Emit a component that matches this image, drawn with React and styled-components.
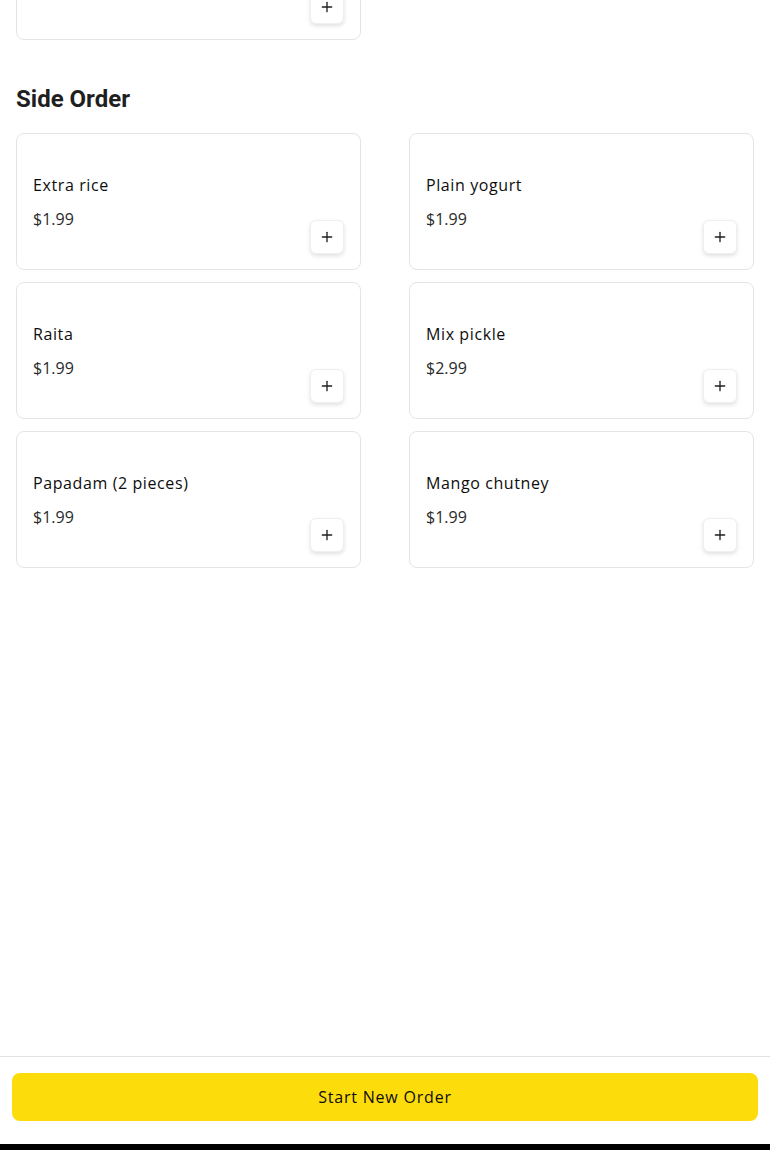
import React from 'react';
import styled, { createGlobalStyle } from 'styled-components';
import { Plus } from 'lucide-react';

const GlobalStyle = createGlobalStyle`
  * { box-sizing: border-box; }
  body {
    margin: 0;
    background: #fff;
    font-family: "Open Sans", "Liberation Sans", sans-serif;
    color: #1f1f1f;
  }
`;

const Page = styled.div`
  margin-top: -97px;
  padding: 0 16px 120px;
`;

const Section = styled.section`
  & + & {
    margin-top: 43px;
  }
`;

const Heading = styled.h2`
  margin: 0 0 18px;
  font-family: Roboto, "Liberation Sans", sans-serif;
  font-size: 24px;
  line-height: 32px;
  font-weight: 700;
  color: #1f1f1f;
`;

const Grid = styled.div`
  display: grid;
  grid-template-columns: 1fr 1fr;
  column-gap: 48px;
  row-gap: 12px;
`;

const Card = styled.div`
  display: grid;
  grid-template-columns: 1fr auto;
  min-height: 137px;
  padding: 16px 16px 15px;
  border: 1px solid #e4e4e4;
  border-radius: 8px;
  background: #fff;
`;

const Info = styled.div`
  align-self: center;
  display: flex;
  flex-direction: column;
  gap: 10px;
`;

const Name = styled.div`
  font-size: 16px;
  line-height: 24px;
  font-weight: 500;
  letter-spacing: 0.6px;
  color: #0d0d0d;
`;

const Price = styled.div`
  font-size: 16px;
  line-height: 24px;
  font-weight: 400;
  color: #2a2a2a;
`;

const AddButton = styled.button`
  align-self: end;
  width: 34px;
  height: 34px;
  display: flex;
  align-items: center;
  justify-content: center;
  padding: 0;
  border: 1px solid #efefef;
  border-radius: 6px;
  background: #fff;
  color: #1f1f1f;
  box-shadow: rgba(0, 0, 0, 0.12) 0px 2px 4px;
  cursor: pointer;
`;

const Footer = styled.footer`
  position: fixed;
  left: 0;
  right: 0;
  bottom: 0;
  background: #fff;
  border-top: 1px solid #e2e2e2;
`;

const FooterInner = styled.div`
  padding: 16px 12px 23px;
`;

const OrderButton = styled.button`
  display: block;
  width: 100%;
  height: 48px;
  border: none;
  border-radius: 8px;
  background: #fddc0c;
  font-family: "Open Sans", "Liberation Sans", sans-serif;
  font-size: 16px;
  font-weight: 500;
  letter-spacing: 0.8px;
  color: #0d0d0d;
  cursor: pointer;
`;

const HomeBar = styled.div`
  height: 6px;
  background: #000;
`;

const sideOrder = [
  { name: 'Extra rice', price: '$1.99' },
  { name: 'Plain yogurt', price: '$1.99' },
  { name: 'Raita', price: '$1.99' },
  { name: 'Mix pickle', price: '$2.99' },
  { name: 'Papadam (2 pieces)', price: '$1.99' },
  { name: 'Mango chutney', price: '$1.99' },
];

const MenuCard = ({ name, price }) => (
  <Card>
    <Info>
      <Name>{name}</Name>
      <Price>{price}</Price>
    </Info>
    <AddButton aria-label={`Add ${name}`}>
      <Plus size={16} strokeWidth={2} />
    </AddButton>
  </Card>
);

const App = () => (
  <>
    <GlobalStyle />
    <Page>
      <Section>
        <Grid>
          <MenuCard name="Lassi" price="$1.99" />
        </Grid>
      </Section>
      <Section>
        <Heading>Side Order</Heading>
        <Grid>
          {sideOrder.map(item => (
            <MenuCard key={item.name} {...item} />
          ))}
        </Grid>
      </Section>
    </Page>
    <Footer>
      <FooterInner>
        <OrderButton>Start New Order</OrderButton>
      </FooterInner>
      <HomeBar />
    </Footer>
  </>
);

export default App;
